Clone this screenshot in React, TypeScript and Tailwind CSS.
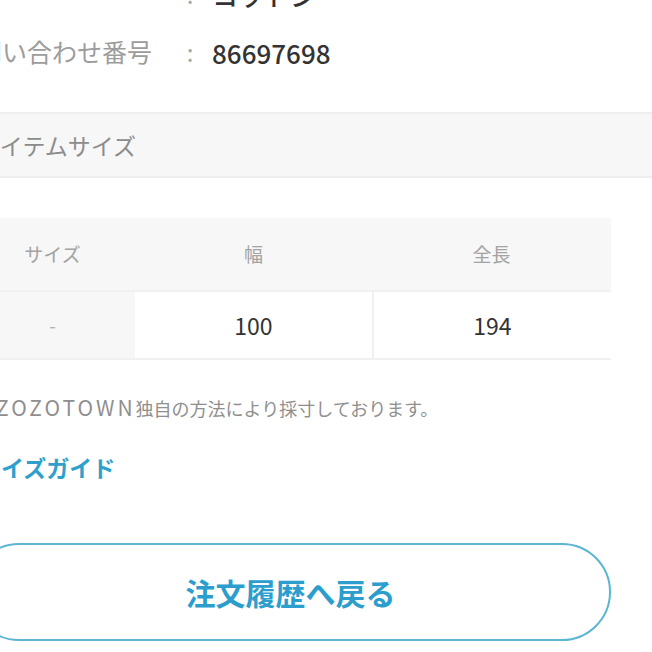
import React from 'react'

const font = { fontFamily: '"Noto Sans CJK JP", "Noto Sans", sans-serif' }

interface InfoRowProps {
  label: string
  value: string
}

const InfoRow: React.FC<InfoRowProps> = ({ label, value }) => (
  <div className="flex h-[58px] items-center pl-[23px]">
    <span className="w-[232px] text-[25px] text-[#9c9c9c]">{label}</span>
    <span className="w-[12px] text-center text-[24px] text-[#a5a5a5]">:</span>
    <span className="ml-[16px] text-[26px] font-medium text-[#333333]">{value}</span>
  </div>
)

const sizeRows = [{ size: '-', width: '100', length: '194' }]

const App: React.FC = () => {
  return (
    <div className="h-[652px] w-[652px] overflow-hidden bg-white" style={font}>
      <div className="-ml-[71px] -mt-[35px] w-[723px]">
        {/* Order info */}
        <InfoRow label="素材" value="コットン" />
        <InfoRow label="お問い合わせ番号" value="86697698" />

        {/* Section header */}
        <div className="mt-[31px] flex h-[66px] items-center border-y-2 border-[#eeeeee] bg-[#f7f7f7] pl-[49px]">
          <span className="text-[23px] text-[#8c8c8c]">アイテムサイズ</span>
        </div>

        {/* Size table */}
        <div className="ml-[41px] mt-[40px] w-[641px]">
          <div className="grid h-[72px] grid-cols-[165px_237px_239px] bg-[#f7f7f7] text-[19px] text-[#a3a3a3]">
            <div className="flex items-center justify-center">サイズ</div>
            <div className="flex items-center justify-center">幅</div>
            <div className="flex items-center justify-center">全長</div>
          </div>
          {sizeRows.map((row) => (
            <div
              key={row.size}
              className="grid h-[70px] grid-cols-[165px_237px_239px] border-y-2 border-r-2 border-[#f1f1f1] bg-[#f7f7f7]"
            >
              <div className="flex items-center justify-center text-[19px] text-[#b0b0b0]">{row.size}</div>
              <div className="flex items-center justify-center bg-white text-[23px] text-[#333333]">{row.width}</div>
              <div className="flex items-center justify-center border-l-2 border-[#f1f1f1] bg-white text-[23px] text-[#333333]">{row.length}</div>
            </div>
          ))}
        </div>

        <p className="ml-[49px] mt-[34px] text-[18px] leading-[26px] text-[#8f8f8f]">
          ※<span className="text-[21px] tracking-[3px]">ZOZOTOWN</span>独自の方法により採寸しております。
        </p>

        <a className="ml-[49px] mt-[31px] block text-[23px] font-bold leading-[30px] text-[#2f9fcc]">サイズガイド</a>

        <button className="ml-[41px] mt-[61px] flex h-[98px] w-[641px] items-center justify-center rounded-full border-2 border-[#5bb5d3] bg-white">
          <span className="text-[30px] font-bold text-[#2c9ecd]">注文履歴へ戻る</span>
        </button>
      </div>
    </div>
  )
}

export default App
